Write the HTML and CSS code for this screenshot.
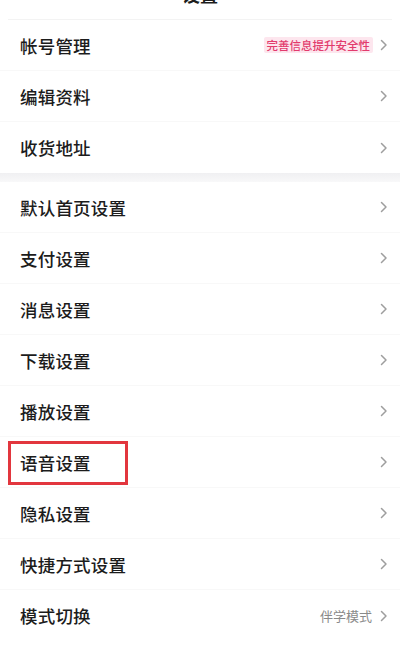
FILE: index.html
```html
<!DOCTYPE html>
<html lang="zh-CN">
<head>
    <meta charset="UTF-8">
    <meta name="viewport" content="width=device-width, initial-scale=1.0">
    <title>设置</title>
    <link rel="stylesheet" href="styles.css">
</head>
<body>
    <div class="header">
        <div class="title">设置</div>
    </div>

    <div class="group">
        <div class="row">
            <span class="label">帐号管理</span>
            <span class="extra">
                <span class="badge">完善信息提升安全性</span>
                <svg class="arrow" viewBox="0 0 8 12"><path d="M1.5 1.5 L6 6 L1.5 10.5"/></svg>
            </span>
        </div>
        <div class="row">
            <span class="label">编辑资料</span>
            <svg class="arrow" viewBox="0 0 8 12"><path d="M1.5 1.5 L6 6 L1.5 10.5"/></svg>
        </div>
        <div class="row">
            <span class="label">收货地址</span>
            <svg class="arrow" viewBox="0 0 8 12"><path d="M1.5 1.5 L6 6 L1.5 10.5"/></svg>
        </div>
    </div>

    <div class="gap"></div>

    <div class="group">
        <div class="row">
            <span class="label">默认首页设置</span>
            <svg class="arrow" viewBox="0 0 8 12"><path d="M1.5 1.5 L6 6 L1.5 10.5"/></svg>
        </div>
        <div class="row">
            <span class="label">支付设置</span>
            <svg class="arrow" viewBox="0 0 8 12"><path d="M1.5 1.5 L6 6 L1.5 10.5"/></svg>
        </div>
        <div class="row">
            <span class="label">消息设置</span>
            <svg class="arrow" viewBox="0 0 8 12"><path d="M1.5 1.5 L6 6 L1.5 10.5"/></svg>
        </div>
        <div class="row">
            <span class="label">下载设置</span>
            <svg class="arrow" viewBox="0 0 8 12"><path d="M1.5 1.5 L6 6 L1.5 10.5"/></svg>
        </div>
        <div class="row">
            <span class="label">播放设置</span>
            <svg class="arrow" viewBox="0 0 8 12"><path d="M1.5 1.5 L6 6 L1.5 10.5"/></svg>
        </div>
        <div class="row marked">
            <span class="label">语音设置</span>
            <svg class="arrow" viewBox="0 0 8 12"><path d="M1.5 1.5 L6 6 L1.5 10.5"/></svg>
            <span class="mark"></span>
        </div>
        <div class="row">
            <span class="label">隐私设置</span>
            <svg class="arrow" viewBox="0 0 8 12"><path d="M1.5 1.5 L6 6 L1.5 10.5"/></svg>
        </div>
        <div class="row">
            <span class="label">快捷方式设置</span>
            <svg class="arrow" viewBox="0 0 8 12"><path d="M1.5 1.5 L6 6 L1.5 10.5"/></svg>
        </div>
        <div class="row">
            <span class="label">模式切换</span>
            <span class="extra">
                <span class="value">伴学模式</span>
                <svg class="arrow" viewBox="0 0 8 12"><path d="M1.5 1.5 L6 6 L1.5 10.5"/></svg>
            </span>
        </div>
    </div>
</body>
</html>
```

FILE: styles.css
```css
* {
    margin: 0;
    padding: 0;
    box-sizing: border-box;
}

body {
    background: #fff;
    font-family: "Noto Sans CJK SC", "Noto Sans", sans-serif;
    color: #1c1c1c;
    width: 400px;
    overflow: hidden;
}

.header {
    height: 20px;
    margin: 0 8px;
    border-bottom: 1px solid #f3f3f3;
    overflow: hidden;
}

.title {
    margin-top: -18px;
    text-align: center;
    font-size: 18px;
    font-weight: 700;
    line-height: 24px;
}

.gap {
    height: 9px;
    background: linear-gradient(#f0f0f2, #f8f8f9);
}

.row {
    position: relative;
    height: 51px;
    padding: 0 12px 0 20px;
    display: flex;
    align-items: center;
    justify-content: space-between;
    border-bottom: 1px solid #f8f8f8;
}

.row:last-child {
    border-bottom: none;
}

.label {
    font-size: 17.5px;
    font-weight: 500;
    letter-spacing: 0.2px;
}

.extra {
    display: flex;
    align-items: center;
}

.badge {
    background: #fde6ee;
    color: #e23b6d;
    font-size: 11.5px;
    font-weight: 500;
    line-height: 16px;
    padding: 0 3px;
    margin-right: 7px;
    border-radius: 2px;
}

.value {
    color: #8a8a8a;
    font-size: 13px;
    margin-right: 8px;
}

.arrow {
    width: 8px;
    height: 12px;
    fill: none;
    stroke: #9e9e9e;
    stroke-width: 1.5;
    stroke-linecap: round;
    stroke-linejoin: round;
}

.mark {
    position: absolute;
    left: 8px;
    top: 4px;
    width: 120px;
    height: 44px;
    border: 3px solid #e2363e;
}
```
